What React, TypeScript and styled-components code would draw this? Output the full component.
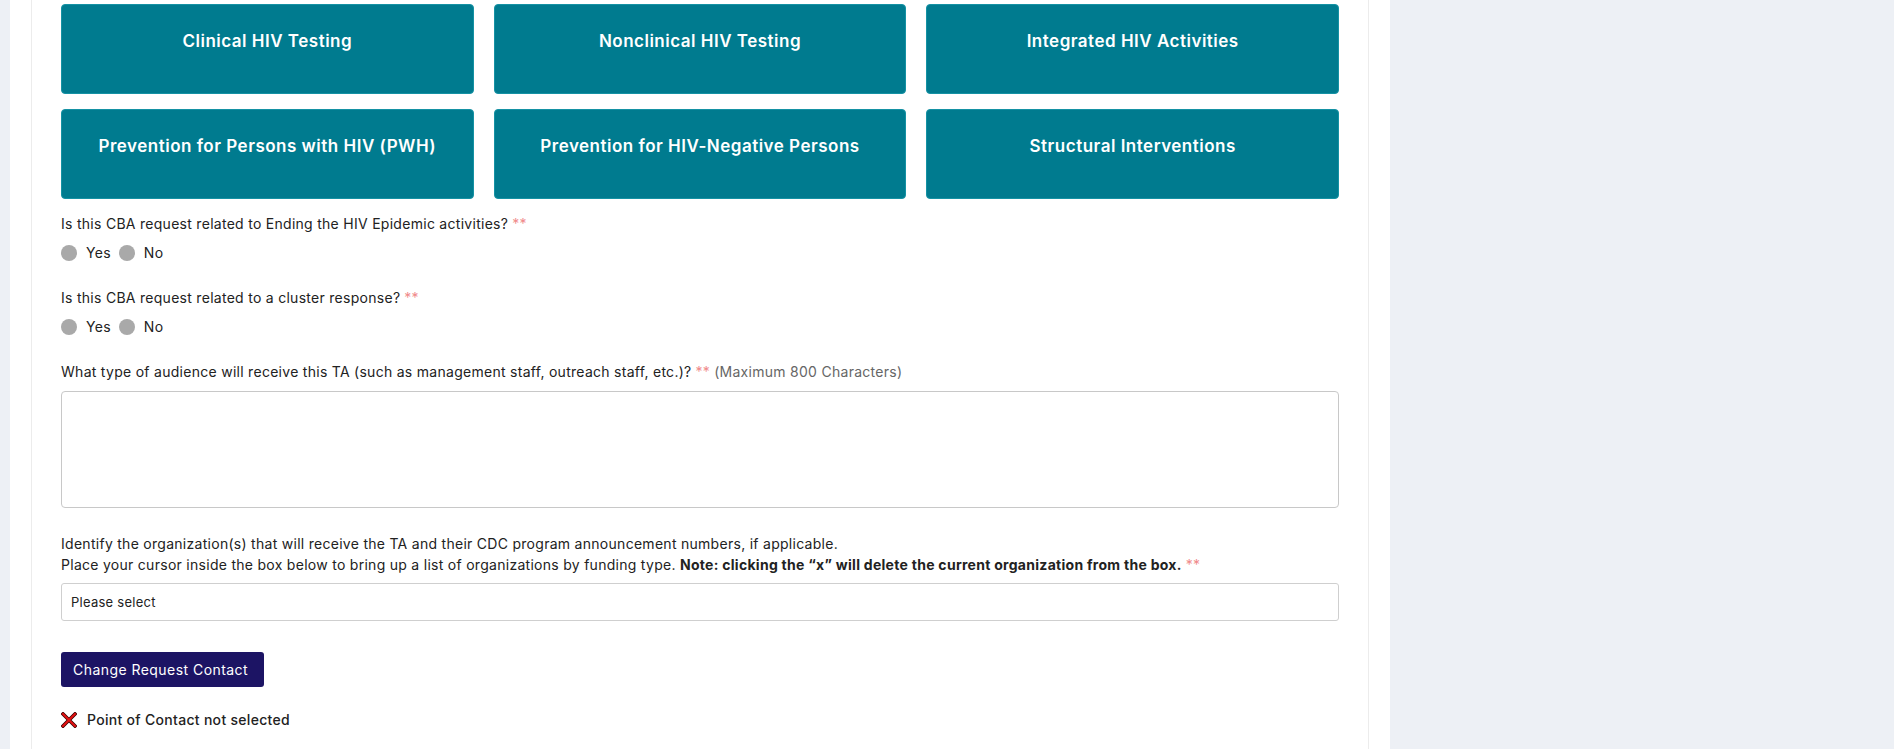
import React from "react";
import styled, { createGlobalStyle } from "styled-components";

const GlobalStyle = createGlobalStyle`
  html, body {
    margin: 0;
    padding: 0;
    background: #edf0f5;
    font-family: Inter, "Open Sans", Arial, sans-serif;
    color: #222;
  }
  * { box-sizing: border-box; }
`;

const Page = styled.div`
  display: flex;
  padding-left: 10px;
  min-height: 749px;
  overflow: hidden;
`;

const Panel = styled.main`
  width: 1380px;
  flex: none;
  background: #ffffff;
  padding: 0 21px;
  display: flex;
`;

const Card = styled.section`
  flex: 1;
  border-left: 1px solid #ececec;
  border-right: 1px solid #ececec;
  padding: 4px 29px 40px;
  display: flex;
  flex-direction: column;
`;

const TileGrid = styled.div`
  display: grid;
  grid-template-columns: repeat(3, 1fr);
  column-gap: 20px;
  row-gap: 15px;
`;

const Tile = styled.button`
  height: 90px;
  background: #007b8f;
  border: 1px solid #1592a4;
  border-radius: 4px;
  color: #ffffff;
  font-family: Inter, Arial, sans-serif;
  font-weight: 600;
  font-size: 17px;
  letter-spacing: 0.5px;
  line-height: 20px;
  padding: 26px 12px 0;
  display: flex;
  justify-content: center;
  align-items: flex-start;
  cursor: pointer;
`;

const Question = styled.div<{ $gap: number }>`
  margin-top: ${(p) => p.$gap}px;
`;

const Label = styled.div`
  font-size: 14px;
  letter-spacing: 0.28px;
  line-height: 21px;
  color: #222;
`;

const Req = styled.span`
  color: #f08a8a;
  margin-left: 4px;
  font-weight: 400;
`;

const Hint = styled.span`
  color: #666;
  margin-left: 4px;
`;

const Strong = styled.strong`
  font-weight: 700;
  color: #222;
`;

const RadioRow = styled.div`
  display: flex;
  align-items: center;
  margin-top: 8px;
  height: 21px;
`;

const RadioItem = styled.label`
  display: inline-flex;
  align-items: center;
  margin-right: 8px;
  font-size: 14px;
  letter-spacing: 0.28px;
  color: #222;
`;

const RadioDot = styled.span`
  width: 16px;
  height: 16px;
  border-radius: 50%;
  background: #a9a9a9;
  margin-right: 9px;
  display: inline-block;
`;

const TextArea = styled.textarea`
  display: block;
  width: 100%;
  height: 117px;
  margin-top: 9px;
  border: 1px solid #c8c8c8;
  border-radius: 4px;
  resize: none;
  font-family: inherit;
  outline: none;
`;

const SelectBox = styled.div`
  margin-top: 8px;
  height: 38px;
  border: 1px solid #cfcfcf;
  border-radius: 3px;
  display: flex;
  align-items: center;
  padding-left: 9px;
  font-size: 13px;
  letter-spacing: 0.25px;
  color: #222;
`;

const ContactButton = styled.button`
  align-self: flex-start;
  margin-top: 31px;
  height: 35px;
  width: 203px;
  background: #1c1464;
  color: #ffffff;
  border: none;
  border-radius: 3px;
  font-family: Inter, Arial, sans-serif;
  font-size: 14px;
  letter-spacing: 0.45px;
  padding: 0 12px;
  text-align: left;
  cursor: pointer;
`;

const Status = styled.div`
  display: flex;
  align-items: center;
  margin-top: 24px;
  font-size: 14px;
  letter-spacing: 0.3px;
  font-weight: 500;
  color: #222;
  gap: 10px;
`;

const XIcon = () => (
  <svg width="16" height="16" viewBox="0 0 16 16">
    <g strokeLinecap="square">
      <path d="M2 2 L14 14 M14 2 L2 14" stroke="#3a0000" strokeWidth="3.6" />
      <path d="M2 2 L14 14 M14 2 L2 14" stroke="#e51212" strokeWidth="2" />
    </g>
  </svg>
);

const tiles = [
  "Clinical HIV Testing",
  "Nonclinical HIV Testing",
  "Integrated HIV Activities",
  "Prevention for Persons with HIV (PWH)",
  "Prevention for HIV-Negative Persons",
  "Structural Interventions",
];

const YesNo = () => (
  <RadioRow>
    <RadioItem>
      <RadioDot />
      Yes
    </RadioItem>
    <RadioItem>
      <RadioDot />
      No
    </RadioItem>
  </RadioRow>
);

export default function App() {
  return (
    <>
      <GlobalStyle />
      <Page>
        <Panel>
          <Card>
            <TileGrid>
              {tiles.map((t) => (
                <Tile key={t}>{t}</Tile>
              ))}
            </TileGrid>

            <Question $gap={14}>
              <Label>
                Is this CBA request related to Ending the HIV Epidemic activities?
                <Req>**</Req>
              </Label>
              <YesNo />
            </Question>

            <Question $gap={24}>
              <Label>
                Is this CBA request related to a cluster response?
                <Req>**</Req>
              </Label>
              <YesNo />
            </Question>

            <Question $gap={24}>
              <Label>
                What type of audience will receive this TA (such as management staff, outreach staff, etc.)?
                <Req>**</Req>
                <Hint>(Maximum 800 Characters)</Hint>
              </Label>
              <TextArea />
            </Question>

            <Question $gap={25}>
              <Label>
                Identify the organization(s) that will receive the TA and their CDC program announcement numbers, if applicable.
                <br />
                Place your cursor inside the box below to bring up a list of organizations by funding type.{" "}
                <Strong>Note: clicking the “x” will delete the current organization from the box.</Strong>
                <Req>**</Req>
              </Label>
              <SelectBox>Please select</SelectBox>
            </Question>

            <ContactButton>Change Request Contact</ContactButton>

            <Status>
              <XIcon />
              Point of Contact not selected
            </Status>
          </Card>
        </Panel>
      </Page>
    </>
  );
}
